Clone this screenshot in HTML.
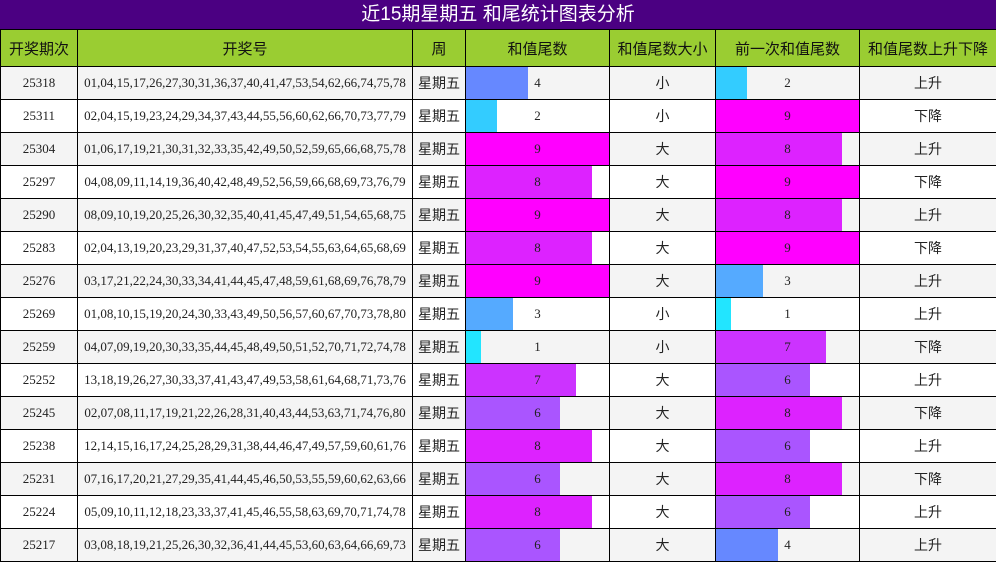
<!DOCTYPE html>
<html><head><meta charset="utf-8"><style>
body{margin:0;width:996px;height:562px;overflow:hidden;background:#fff;font-family:"Liberation Serif","Noto Serif CJK SC",serif;}
.t{position:absolute;left:0;top:0;width:996px;height:29px;background:#4b0082;color:#fff;font:19px "Liberation Sans","Noto Sans CJK SC",sans-serif;text-align:center;line-height:30px;}
table{position:absolute;left:0;top:29px;border-collapse:collapse;table-layout:fixed;width:996px;}
td,th{border:1px solid #000;padding:0;text-align:center;font-size:13px;color:#222;position:relative;overflow:hidden;}
th{background:#9acd32;height:36px;font:normal 15px "Liberation Sans","Noto Sans CJK SC",sans-serif;color:#111;}
tr.r td{height:32px;}
tr.r:nth-child(even) td{background:#f4f4f4;}
tr.r:nth-child(odd) td{background:#fff;}
.c{font-family:"Liberation Sans","Noto Sans CJK SC",sans-serif;font-size:14px;}
.b{position:absolute;left:0;top:0;bottom:0;}
.n{position:relative;}
.v1{background:#22e5ff;width:15px}.v2{background:#33ccff;width:31px}.v3{background:#55aaff;width:47px}.v4{background:#6688ff;width:62px}
.v6{background:#aa55ff;width:94px}.v7{background:#cc33ff;width:110px}.v8{background:#dd22ff;width:126px}.v9{background:#ff00ff;width:144px}
</style></head><body>
<div class="t">近15期星期五 和尾统计图表分析</div>
<table>
<colgroup><col style="width:77px"><col style="width:335px"><col style="width:53px"><col style="width:144px"><col style="width:106px"><col style="width:144px"><col style="width:137px"></colgroup>
<tr><th>开奖期次</th><th>开奖号</th><th>周</th><th>和值尾数</th><th>和值尾数大小</th><th>前一次和值尾数</th><th>和值尾数上升下降</th></tr>
<tr class="r"><td>25318</td><td>01,04,15,17,26,27,30,31,36,37,40,41,47,53,54,62,66,74,75,78</td><td class="c">星期五</td><td><div class="b v4"></div><span class="n">4</span></td><td class="c">小</td><td><div class="b v2"></div><span class="n">2</span></td><td class="c">上升</td></tr>
<tr class="r"><td>25311</td><td>02,04,15,19,23,24,29,34,37,43,44,55,56,60,62,66,70,73,77,79</td><td class="c">星期五</td><td><div class="b v2"></div><span class="n">2</span></td><td class="c">小</td><td><div class="b v9"></div><span class="n">9</span></td><td class="c">下降</td></tr>
<tr class="r"><td>25304</td><td>01,06,17,19,21,30,31,32,33,35,42,49,50,52,59,65,66,68,75,78</td><td class="c">星期五</td><td><div class="b v9"></div><span class="n">9</span></td><td class="c">大</td><td><div class="b v8"></div><span class="n">8</span></td><td class="c">上升</td></tr>
<tr class="r"><td>25297</td><td>04,08,09,11,14,19,36,40,42,48,49,52,56,59,66,68,69,73,76,79</td><td class="c">星期五</td><td><div class="b v8"></div><span class="n">8</span></td><td class="c">大</td><td><div class="b v9"></div><span class="n">9</span></td><td class="c">下降</td></tr>
<tr class="r"><td>25290</td><td>08,09,10,19,20,25,26,30,32,35,40,41,45,47,49,51,54,65,68,75</td><td class="c">星期五</td><td><div class="b v9"></div><span class="n">9</span></td><td class="c">大</td><td><div class="b v8"></div><span class="n">8</span></td><td class="c">上升</td></tr>
<tr class="r"><td>25283</td><td>02,04,13,19,20,23,29,31,37,40,47,52,53,54,55,63,64,65,68,69</td><td class="c">星期五</td><td><div class="b v8"></div><span class="n">8</span></td><td class="c">大</td><td><div class="b v9"></div><span class="n">9</span></td><td class="c">下降</td></tr>
<tr class="r"><td>25276</td><td>03,17,21,22,24,30,33,34,41,44,45,47,48,59,61,68,69,76,78,79</td><td class="c">星期五</td><td><div class="b v9"></div><span class="n">9</span></td><td class="c">大</td><td><div class="b v3"></div><span class="n">3</span></td><td class="c">上升</td></tr>
<tr class="r"><td>25269</td><td>01,08,10,15,19,20,24,30,33,43,49,50,56,57,60,67,70,73,78,80</td><td class="c">星期五</td><td><div class="b v3"></div><span class="n">3</span></td><td class="c">小</td><td><div class="b v1"></div><span class="n">1</span></td><td class="c">上升</td></tr>
<tr class="r"><td>25259</td><td>04,07,09,19,20,30,33,35,44,45,48,49,50,51,52,70,71,72,74,78</td><td class="c">星期五</td><td><div class="b v1"></div><span class="n">1</span></td><td class="c">小</td><td><div class="b v7"></div><span class="n">7</span></td><td class="c">下降</td></tr>
<tr class="r"><td>25252</td><td>13,18,19,26,27,30,33,37,41,43,47,49,53,58,61,64,68,71,73,76</td><td class="c">星期五</td><td><div class="b v7"></div><span class="n">7</span></td><td class="c">大</td><td><div class="b v6"></div><span class="n">6</span></td><td class="c">上升</td></tr>
<tr class="r"><td>25245</td><td>02,07,08,11,17,19,21,22,26,28,31,40,43,44,53,63,71,74,76,80</td><td class="c">星期五</td><td><div class="b v6"></div><span class="n">6</span></td><td class="c">大</td><td><div class="b v8"></div><span class="n">8</span></td><td class="c">下降</td></tr>
<tr class="r"><td>25238</td><td>12,14,15,16,17,24,25,28,29,31,38,44,46,47,49,57,59,60,61,76</td><td class="c">星期五</td><td><div class="b v8"></div><span class="n">8</span></td><td class="c">大</td><td><div class="b v6"></div><span class="n">6</span></td><td class="c">上升</td></tr>
<tr class="r"><td>25231</td><td>07,16,17,20,21,27,29,35,41,44,45,46,50,53,55,59,60,62,63,66</td><td class="c">星期五</td><td><div class="b v6"></div><span class="n">6</span></td><td class="c">大</td><td><div class="b v8"></div><span class="n">8</span></td><td class="c">下降</td></tr>
<tr class="r"><td>25224</td><td>05,09,10,11,12,18,23,33,37,41,45,46,55,58,63,69,70,71,74,78</td><td class="c">星期五</td><td><div class="b v8"></div><span class="n">8</span></td><td class="c">大</td><td><div class="b v6"></div><span class="n">6</span></td><td class="c">上升</td></tr>
<tr class="r"><td>25217</td><td>03,08,18,19,21,25,26,30,32,36,41,44,45,53,60,63,64,66,69,73</td><td class="c">星期五</td><td><div class="b v6"></div><span class="n">6</span></td><td class="c">大</td><td><div class="b v4"></div><span class="n">4</span></td><td class="c">上升</td></tr>
</table>
</body></html>
